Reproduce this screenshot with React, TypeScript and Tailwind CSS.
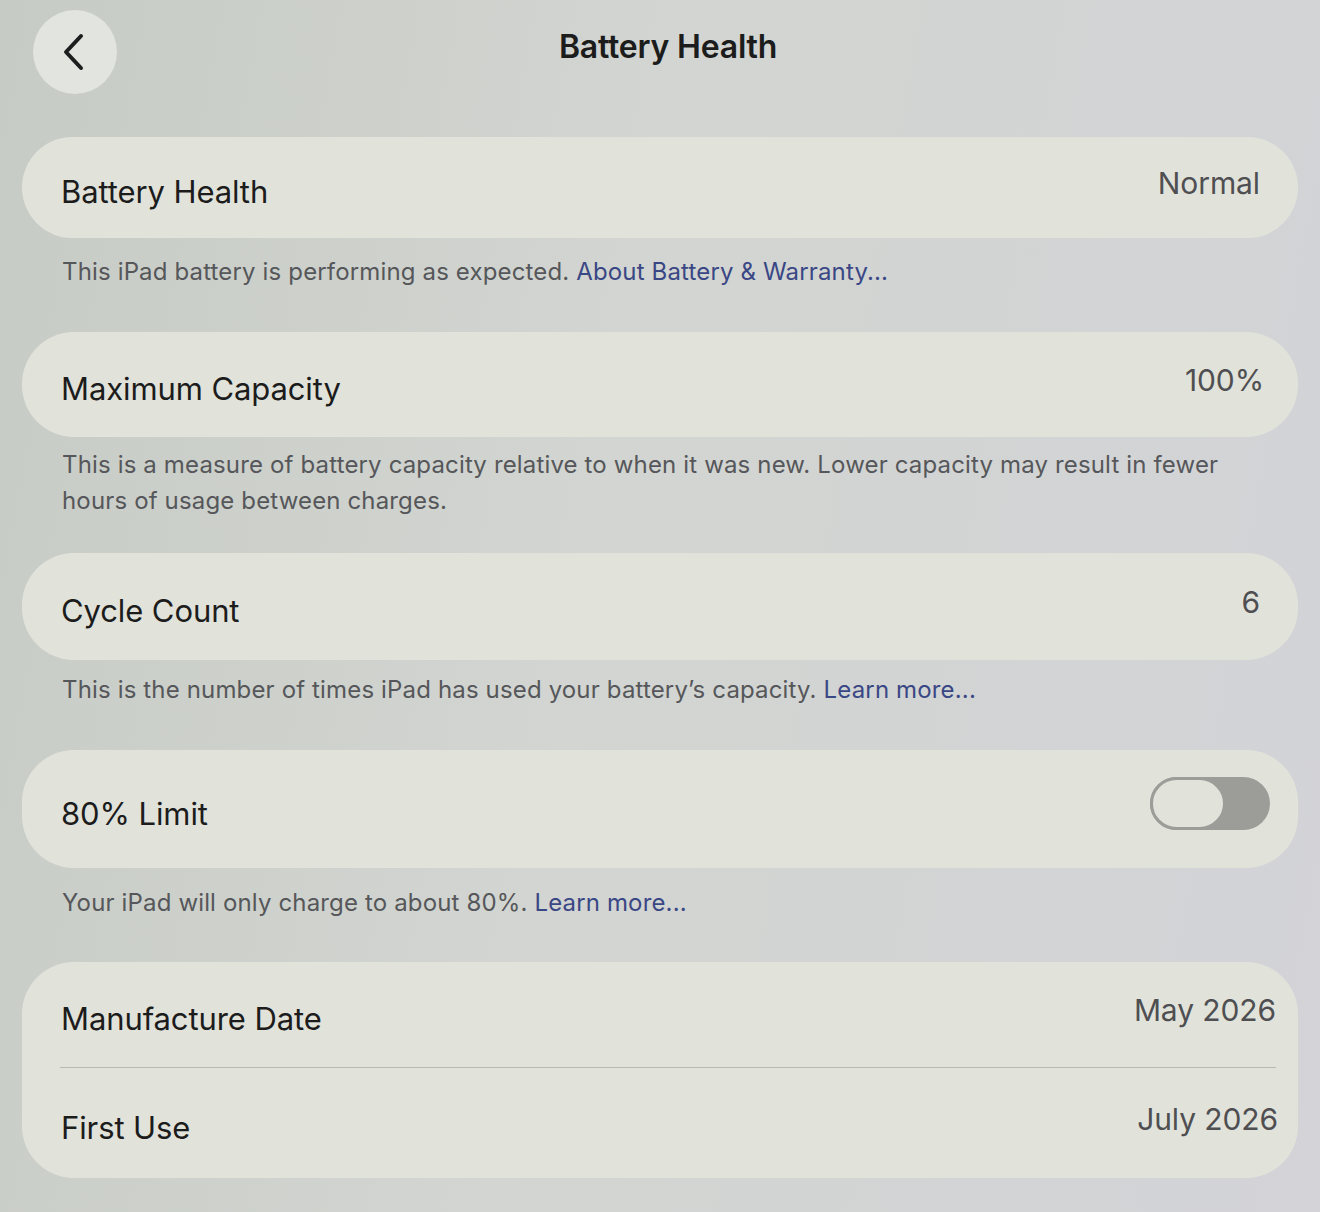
import { ReactNode } from 'react';

const font = { fontFamily: 'Inter, "Noto Sans", "Liberation Sans", sans-serif' };

type RowProps = {
  label: string;
  children?: ReactNode;
  className?: string;
};

// className carries the row height and right padding
function Row({ label, children, className = 'h-[104px] pr-[38px]' }: RowProps) {
  return (
    <div className={`flex items-center justify-between pl-[39px] ${className}`}>
      <span className="mt-[10px] text-[31px] tracking-[-0.1px] text-[#1c1c1c]">{label}</span>
      {children}
    </div>
  );
}

function Value({ children }: { children: ReactNode }) {
  return <span className="-mt-2 text-[30px] tracking-[-0.1px] text-[#4f4f52]">{children}</span>;
}

function Card({ children, className = '' }: { children: ReactNode; className?: string }) {
  return <div className={`rounded-[52px] bg-[#e1e3db] ${className}`}>{children}</div>;
}

function Footer({ children, className = 'pt-[16px] pb-[42px]' }: { children: ReactNode; className?: string }) {
  return (
    <p className={`pl-[40px] pr-[60px] text-[24px] leading-[36px] tracking-[0.15px] text-[#56575a] ${className}`}>
      {children}
    </p>
  );
}

function Link({ children }: { children: ReactNode }) {
  return <span className="text-[#3a4785]">{children}</span>;
}

function Toggle() {
  // off state: light thumb sitting left over a grey track
  return (
    <div className="relative -mt-3 mr-[-10px] h-[53px] w-[120px] rounded-full bg-[#9c9d99]">
      <div className="absolute left-0 top-0 h-[53px] w-[76px] rounded-full border-[3px] border-[#9c9d99] bg-[#e1e3db]" />
    </div>
  );
}

export default function App() {
  return (
    <div
      style={font}
      className="min-h-[1212px] w-full bg-[linear-gradient(100deg,#c7cbc5_0%,#d2d5d1_45%,#d3d3d8_100%)] px-[22px] antialiased"
    >
      <header className="relative flex h-[137px] items-start justify-center">
        <button
          type="button"
          className="absolute left-[11px] top-[10px] flex h-[84px] w-[84px] items-center justify-center rounded-full bg-[#e1e4df]"
        >
          <svg width="30" height="40" viewBox="0 0 30 40" fill="none">
            <path
              d="M21 4 L6 20 L21 36"
              stroke="#1d1d1d"
              strokeWidth="4"
              strokeLinecap="round"
              strokeLinejoin="round"
            />
          </svg>
        </button>
        <h1 className="ml-[16px] pt-[27px] text-[32px] font-semibold leading-[40px] tracking-[-0.2px] text-[#1c1c1c]">
          Battery Health
        </h1>
      </header>

      <Card>
        <Row label="Battery Health" className="h-[101px] pr-[38px]">
          <Value>Normal</Value>
        </Row>
      </Card>
      <Footer>
        This iPad battery is performing as expected. <Link>About Battery &amp; Warranty...</Link>
      </Footer>

      <Card>
        <Row label="Maximum Capacity" className="h-[105px] pr-[34px]">
          <Value>100%</Value>
        </Row>
      </Card>
      <Footer className="pt-[10px] pb-[34px]">
        This is a measure of battery capacity relative to when it was new. Lower capacity may result in fewer
        hours of usage between charges.
      </Footer>

      <Card>
        <Row label="Cycle Count" className="h-[107px] pr-[38px]">
          <Value>6</Value>
        </Row>
      </Card>
      <Footer className="pt-[12px] pb-[42px]">
        This is the number of times iPad has used your battery’s capacity. <Link>Learn more...</Link>
      </Footer>

      <Card>
        <Row label="80% Limit" className="h-[118px] pr-[38px]">
          <Toggle />
        </Row>
      </Card>
      <Footer className="pt-[17px] pb-[41px]">
        Your iPad will only charge to about 80%. <Link>Learn more...</Link>
      </Footer>

      <Card>
        <Row label="Manufacture Date" className="h-[105px] pr-[22px]">
          <Value>May 2026</Value>
        </Row>
        <div className="ml-[38px] mr-[22px] border-t border-[#b9bab6]" />
        <Row label="First Use" className="h-[110px] pr-[20px]">
          <Value>July 2026</Value>
        </Row>
      </Card>
    </div>
  );
}
